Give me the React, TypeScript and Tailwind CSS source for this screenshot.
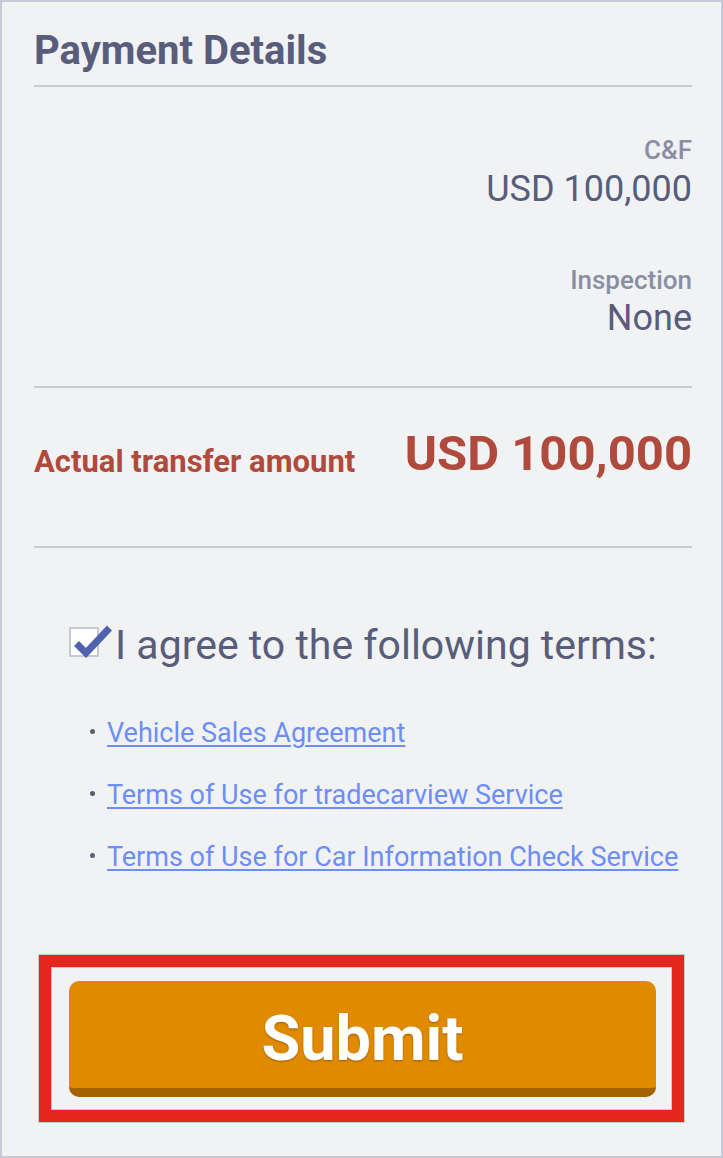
import React from "react";

const links = [
  "Vehicle Sales Agreement",
  "Terms of Use for tradecarview Service",
  "Terms of Use for Car Information Check Service",
];

export default function App() {
  return (
    <div
      className="h-[1158px] w-[723px] border-2 border-[#c6cad6] bg-[#f1f2f4] text-[#585d7b]"
      style={{ fontFamily: "Roboto, 'Noto Sans', sans-serif" }}
    >
      <div className="pl-[32px] pr-[29px]">
        {/* Title */}
        <div className="pt-[26px] pb-[11px] border-b-2 border-[#c9cbd3]">
          <h1 className="text-[40px] leading-[46px] font-bold">Payment Details</h1>
        </div>

        {/* Breakdown */}
        <div className="flex flex-col items-end text-right">
          <div className="mt-[48px] text-[26px] leading-[30px] font-medium text-[#8a8ea3]">C&amp;F</div>
          <div className="mt-[3px] text-[36px] leading-[42px]">USD 100,000</div>
          <div className="mt-[55px] text-[26px] leading-[30px] font-medium text-[#8a8ea3]">Inspection</div>
          <div className="mt-[2px] text-[36px] leading-[42px]">None</div>
        </div>
        <div className="mt-[47px] h-[2px] bg-[#c9cbd3]" />

        {/* Total */}
        <div className="mt-[37px] flex items-baseline justify-between text-[#b04a3c]">
          <span className="relative top-[2px] text-[31px] leading-[38px] font-bold">Actual transfer amount</span>
          <span className="text-[49px] leading-[58px] font-bold">USD 100,000</span>
        </div>
        <div className="mt-[63px] h-[2px] bg-[#c9cbd3]" />

        {/* Agree */}
        <div className="mt-[73px] flex justify-center">
          <div className="flex items-start">
            <div className="relative mt-[6px] h-[30px] w-[30px] shrink-0 border-2 border-[#c6cad6] bg-white">
              <svg
                className="absolute left-[-2px] top-[-2px] overflow-visible"
                width="44"
                height="34"
                viewBox="0 0 44 34"
              >
                <path
                  d="M7.5 16.5 L17 26 L40.5 1"
                  fill="none"
                  stroke="#4f62b0"
                  strokeWidth="7"
                  strokeLinecap="butt"
                  strokeLinejoin="miter"
                />
              </svg>
            </div>
            <span className="ml-[16px] text-[41px] leading-[48px]">I agree to the following terms:</span>
          </div>
        </div>

        {/* Links */}
        <ul className="mt-[49px] flex flex-col gap-[32px] pl-[73px]">
          {links.map((l) => (
            <li key={l} className="relative flex items-center text-[27px] leading-[30px]">
              <span className="absolute left-[-17px] top-[11px] h-[5px] w-[5px] rounded-full bg-[#5a5e70]" />
              <a
                href="#"
                className="text-[#6c8ef5] underline decoration-2 underline-offset-[3px]"
              >
                {l}
              </a>
            </li>
          ))}
        </ul>
      </div>

      {/* Submit highlight */}
      <div className="ml-[36px] mt-[82px] w-[647px] border border-[#c6cad6]">
        <div className="border-[12px] border-[#e5261f]">
          <div className="border border-[#c6cad6] pt-[13px] pb-[12px] pl-[17px] pr-[15px]">
            <button className="flex h-[116px] w-full items-center justify-center rounded-[10px] border-b-[9px] border-[#a56300] bg-[#e08a00] pt-[10px] text-[63px] font-bold text-white [text-shadow:0_1px_2px_rgba(120,60,0,0.6)]">
              Submit
            </button>
          </div>
        </div>
      </div>
    </div>
  );
}
